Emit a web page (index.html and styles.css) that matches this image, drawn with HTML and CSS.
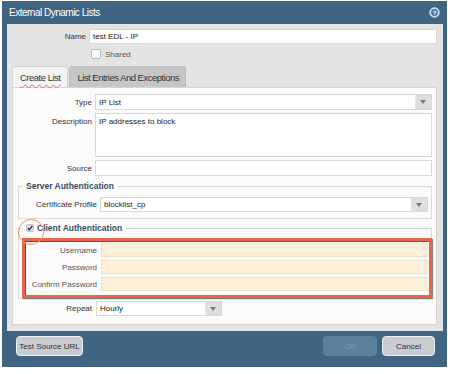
FILE: index.html
```html
<!DOCTYPE html>
<html>
    <head>
        <meta charset="UTF-8">
        <title>External Dynamic Lists</title>
        <link rel="stylesheet" href="styles.css">
    </head>
    <body>
        <div class="dialog">
            <div class="title-bar">
                <span class="title">External Dynamic Lists</span>
                <svg class="help" width="11" height="11" viewBox="0 0 11 11">
                    <circle cx="5.5" cy="5.5" r="5" fill="#d6e3ee" stroke="#9fb9cc" stroke-width="0.8"/>
                    <circle cx="5.5" cy="5.5" r="3.4" fill="#3f78a8"/>
                    <text x="5.5" y="7.6" text-anchor="middle" font-size="6" font-weight="bold" fill="#fff" font-family="Liberation Sans, sans-serif">?</text>
                </svg>
            </div>

            <div class="content">
                <div class="row name-row">
                    <span class="lbl">Name</span>
                    <div class="field">test EDL - IP</div>
                </div>
                <div class="shared-row">
                    <span class="check"></span>
                    <span class="shared-text">Shared</span>
                </div>

                <div class="tabs">
                    <div class="tab active"><span class="squiggle">Create List</span></div>
                    <div class="tab">List Entries And Exceptions</div>
                </div>

                <div class="panel">
                    <div class="row">
                        <span class="lbl">Type</span>
                        <div class="field select"><span class="val">IP List</span><span class="arrow"></span></div>
                    </div>
                    <div class="row desc-row">
                        <span class="lbl">Description</span>
                        <div class="field textarea">IP addresses to block</div>
                    </div>
                    <div class="row">
                        <span class="lbl">Source</span>
                        <div class="field"></div>
                    </div>

                    <fieldset class="group server">
                        <legend>Server Authentication</legend>
                        <div class="row">
                            <span class="lbl">Certificate Profile</span>
                            <div class="field select"><span class="val">blocklist_cp</span><span class="arrow"></span></div>
                        </div>
                    </fieldset>

                    <fieldset class="group client">
                        <legend>
                            <span class="check checked">
                                <svg width="6" height="6" viewBox="0 0 6 6"><path d="M0.8 3.2 L2.4 4.8 L5.3 1" fill="none" stroke="#333" stroke-width="1.3"/></svg>
                            </span>Client Authentication
                        </legend>
                        <span class="ring"></span>
                        <div class="highlight">
                            <div class="row">
                                <span class="lbl">Username</span>
                                <div class="field beige"></div>
                            </div>
                            <div class="row">
                                <span class="lbl">Password</span>
                                <div class="field beige"></div>
                            </div>
                            <div class="row">
                                <span class="lbl">Confirm Password</span>
                                <div class="field beige"></div>
                            </div>
                        </div>
                    </fieldset>

                    <div class="row repeat-row">
                        <span class="lbl">Repeat</span>
                        <div class="field select"><span class="val">Hourly</span><span class="arrow"></span></div>
                    </div>
                </div>
            </div>

            <div class="footer">
                <button class="btn">Test Source URL</button>
                <div class="btn-group">
                    <button class="btn disabled">OK</button>
                    <button class="btn">Cancel</button>
                </div>
            </div>
        </div>
    </body>
</html>
```

FILE: styles.css
```css
html {
    width: 100%;
    height: 100%;
}

body {
    margin: 0;
    background: #fff;
    font-family: "Liberation Sans", Arial, sans-serif;
    font-size: 8px;
    color: #333;
}

.dialog {
    margin: 1px 0 0 2px;
    width: 445px;
    height: 366px;
    background: #3f6582;
    display: flex;
    flex-direction: column;
}

.title-bar {
    height: 23px;
    display: flex;
    align-items: center;
    justify-content: space-between;
    padding: 0 7px 0 7px;
    color: #fff;
}

.title {
    font-size: 10px;
    letter-spacing: -0.5px;
}

.help {
    display: block;
}

.content {
    margin: 0 4px 0 5px;
    background: #e4e4e4;
    padding: 5px 6px 6px 5px;
}

.row {
    display: flex;
    align-items: center;
    height: 16px;
}

.lbl {
    width: 74px;
    flex: none;
    text-align: right;
    margin-right: 3px;
    color: #333;
    white-space: nowrap;
}

.field {
    flex: 1;
    align-self: stretch;
    box-sizing: border-box;
    background: #fff;
    border: 1px solid #d8d8d8;
    padding-left: 3px;
    display: flex;
    align-items: center;
    color: #222;
}

.name-row {
    height: 15px;
}

.shared-row {
    display: flex;
    align-items: center;
    height: 10px;
    margin-top: 5px;
    padding-left: 79px;
}

.check {
    width: 10px;
    height: 10px;
    box-sizing: border-box;
    background: #fff;
    border: 1px solid #b5b5b5;
    border-radius: 2px;
    display: inline-flex;
    align-items: center;
    justify-content: center;
    flex: none;
}

.shared-text {
    margin-left: 4px;
    color: #555;
}

.tabs {
    display: flex;
    margin-top: 7px;
    height: 21px;
}

.tab {
    box-sizing: border-box;
    height: 21px;
    padding: 0 6px 0 7px;
    display: flex;
    align-items: center;
    white-space: nowrap;
    font-size: 9.5px;
    letter-spacing: -0.5px;
    background: #c6c6c6;
    border: 1px solid #bdbdbd;
    border-bottom: none;
    border-radius: 3px 3px 0 0;
    margin-right: 1px;
    color: #333;
}

.tab.active {
    padding: 0 7px 0 7px;
    background: #f3f3f3;
    border-color: #d3d3d3;
}

.squiggle {
    text-decoration: underline wavy #e46c6c;
    text-decoration-thickness: 1px;
    text-underline-offset: 3px;
}

.panel {
    background: #fbfbfb;
    border: 1px solid #d6d6d6;
    padding: 6px 4px 8px 5px;
}

.desc-row,
.row + .row {
    margin-top: 3px;
}

.desc-row {
    height: 44px;
    align-items: flex-start;
}

.desc-row .lbl {
    padding-top: 4px;
}

.textarea {
    align-items: flex-start;
    padding-top: 3px;
}

.select {
    padding-right: 0;
}

.select .val {
    flex: 1;
}

.arrow {
    width: 15px;
    align-self: stretch;
    background: #dedede;
    border-left: 1px solid #e8e8e8;
    position: relative;
}

.arrow::after {
    content: "";
    position: absolute;
    left: 4px;
    top: 5px;
    border-left: 3.5px solid transparent;
    border-right: 3.5px solid transparent;
    border-top: 4px solid #7a7a7a;
}

.group {
    margin: 0;
    border: 1px solid #d8d8d8;
    min-width: 0;
}

.group legend {
    padding: 0 4px 0 3px;
    line-height: 10px;
    font-size: 8.5px;
    font-weight: bold;
    color: #3e4a58;
    display: flex;
    align-items: center;
}

.server {
    margin-top: 5px;
    padding: 6px 3px 6px 4px;
}

.server .row {
    height: 15px;
}

.client {
    margin-top: 4px;
    padding: 5px 3px 0 4px;
    position: relative;
}

.client .check {
    width: 8px;
    height: 8px;
    background: #dadada;
    border-color: #c2c2c2;
    margin-right: 3px;
}

.ring {
    position: absolute;
    left: -1px;
    top: -14px;
    width: 24px;
    height: 24px;
    border: 1.5px solid #f29a4c;
    border-radius: 50%;
}

.highlight {
    margin: 0 -4px 0 -1px;
    border: 3px solid #e9644f;
    box-shadow: inset 1px 1px 0 #5a5a5a, 1px 1px 1px rgba(0, 0, 0, 0.45);
    padding: 2px 1px 4px 0;
}

.highlight .lbl {
    width: 72px;
    margin-right: 4px;
    color: #555;
}

.highlight .row {
    height: 14px;
}

.beige {
    background: #fdf0d6;
    border-color: #ece2cc;
}

.repeat-row {
    margin-top: 2px;
    height: 15px;
}

.repeat-row .lbl {
    margin-right: 4px;
}

.repeat-row .field {
    flex: none;
    width: 126px;
}

.footer {
    display: flex;
    justify-content: space-between;
    padding: 5px 12px 0 14px;
}

.btn-group {
    display: flex;
    gap: 5px;
}

.btn {
    font-family: "Liberation Sans", Arial, sans-serif;
    font-size: 8px;
    height: 20px;
    box-sizing: border-box;
    padding: 0;
    white-space: nowrap;
    background: #c9cbce;
    color: #333;
    border: 1.5px solid #eef0f2;
    border-radius: 4px;
    min-width: 53px;
    cursor: pointer;
}

.btn:first-child {
    width: 67px;
}

.btn.disabled {
    width: 54px;
    background: #5b8099;
    border-color: #5b8099;
    color: #7f9db3;
}
```
